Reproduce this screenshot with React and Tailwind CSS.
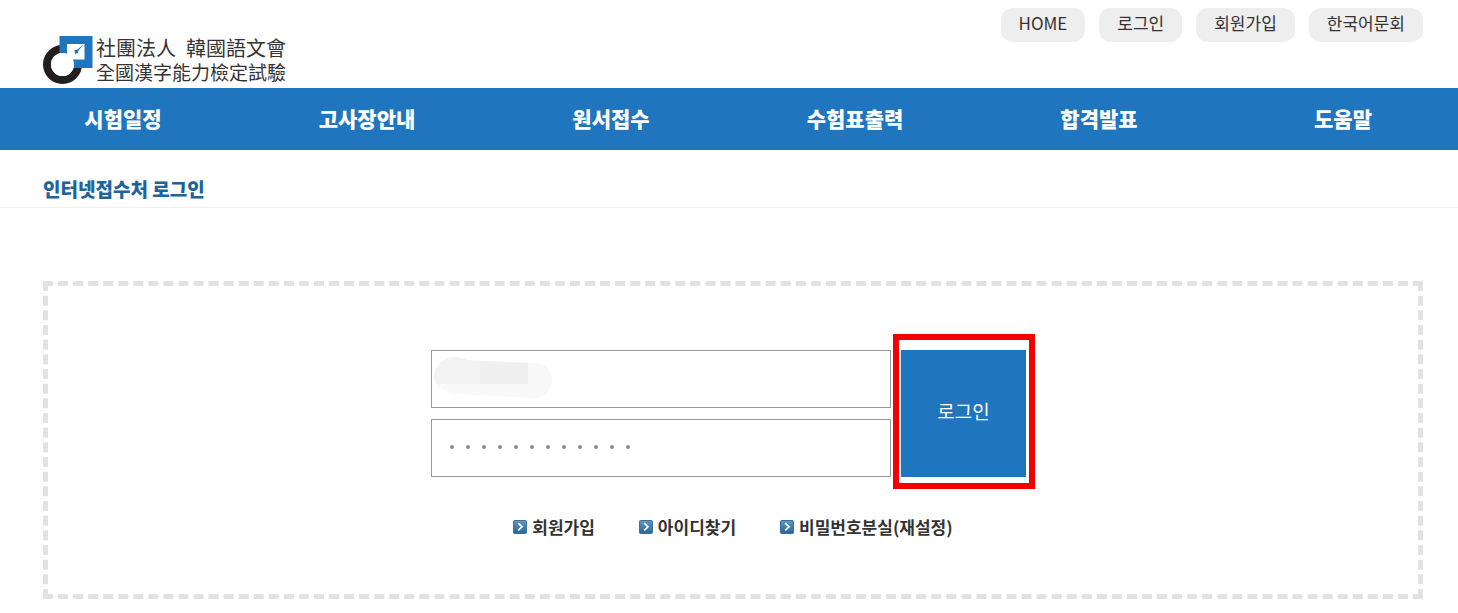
import { useState } from "react";

const topLinks = ["HOME", "로그인", "회원가입", "한국어문회"];
const menu = ["시험일정", "고사장안내", "원서접수", "수험표출력", "합격발표", "도움말"];
const helpLinks = ["회원가입", "아이디찾기", "비밀번호분실(재설정)"];

function LogoMark() {
  return (
    <svg viewBox="0 0 50 48" className="h-12 w-[50px]" aria-hidden="true">
      <circle cx="19.5" cy="28.5" r="15.5" fill="none" stroke="#231f20" strokeWidth="8" />
      <path d="M16.5 0H49.5V32H30.5A12 12 0 0 0 16.5 17Z" fill="#1f75be" />
      <circle cx="19.5" cy="28.5" r="11.5" fill="#fff" />
      <path d="M24 8H41.5V23.5H29L24 19Z" fill="#fff" />
      <path d="M40.5 8.5L35.4 14.6L35 17.2L32 17.8L31.4 14.2L34.4 13.4Z" fill="#1f75be" />
    </svg>
  );
}

function ArrowIcon() {
  return (
    <svg viewBox="0 0 14 14" className="size-3.5" aria-hidden="true">
      <defs>
        <linearGradient id="arrowFill" x1="0" y1="0" x2="0" y2="1">
          <stop offset="0" stopColor="#5f97bf" />
          <stop offset="1" stopColor="#2a649b" />
        </linearGradient>
      </defs>
      <rect x="0.5" y="0.5" width="13" height="13" rx="1" fill="url(#arrowFill)" stroke="#3a719d" />
      <path d="M5.2 3.2L9 6.8L5.2 10.4" fill="none" stroke="#fff" strokeWidth="1.7" />
    </svg>
  );
}

function PasswordField() {
  const [value, setValue] = useState("abcdefghijkl");
  return (
    <div className="relative">
      <input
        type="password"
        aria-label="비밀번호"
        value={value}
        onChange={(e) => setValue(e.target.value)}
        className="block h-[58px] w-full border border-[#999] px-4 text-[16px] text-transparent outline-none"
      />
      <div className="pointer-events-none absolute inset-x-[19px] top-[26px] flex gap-3 overflow-hidden" aria-hidden="true">
        {Array.from(value, (_, i) => (
          <span key={i} className="size-1 shrink-0 rounded-full bg-[#8c8c8c]" />
        ))}
      </div>
    </div>
  );
}

export default function App() {
  return (
    <div className="bg-white font-['Noto_Sans_CJK_KR',sans-serif] text-[#333]">
      <header>
        <div className="flex h-22 items-start justify-between pr-[35px] pl-[43px]">
          <a href="#" className="flex gap-[3px] pt-9 text-[#333]">
            <LogoMark />
            <span className="flex flex-col font-['Noto_Sans_CJK_TC',sans-serif]">
              <span className="flex gap-[10px] text-[20px] leading-6">
                <span>社團法人</span>
                <span>韓國語文會</span>
              </span>
              <span className="text-[19px] leading-6">全國漢字能力檢定試驗</span>
            </span>
          </a>
          <nav className="flex gap-[14px] pt-2">
            {topLinks.map((label) => (
              <a key={label} href="#" className="h-[34px] rounded-xl bg-[#eee] px-[18px] text-[17px] leading-[30px]">
                {label}
              </a>
            ))}
          </nav>
        </div>
        <nav className="grid h-[62px] grid-cols-6 items-center gap-[84px] bg-[#1f75be] pr-[35px] pl-[43px] text-center text-[21px] font-black text-white">
          {menu.map((label) => (
            <a key={label} href="#" className="whitespace-nowrap">
              {label}
            </a>
          ))}
        </nav>
      </header>

      <main>
        <h1 className="border-b border-[#eee] pt-6 pb-[3px] pl-[43px] text-[19px] leading-[30px] font-black text-[#20639b]">
          인터넷접수처 로그인
        </h1>

        <section className="mt-[73px] mr-[35px] mb-[14px] ml-[43px] border-5 border-dashed border-[#e2e2e2] pt-16 pb-[55px]">
          <form className="flex justify-center gap-[10px] pr-[9px]" onSubmit={(e) => e.preventDefault()}>
            <div className="flex w-[460px] flex-col gap-[11px]">
              <div className="relative">
                <input type="text" aria-label="아이디" className="block h-[58px] w-full border border-[#999] px-4 text-[16px] outline-none" />
                <svg viewBox="0 0 118 42" className="pointer-events-none absolute top-[7px] left-[3px] h-[42px] w-[118px]" aria-hidden="true">
                  <path d="M19 0Q27 0 33 3L103 6Q118 9 118 24Q116 40 101 41L20 37Q3 34 0 19Q2 3 19 0Z" fill="#f9f9f9" />
                  <path d="M19 0Q27 0 33 3L46 4V27H2Q0 22 0 19Q2 3 19 0Z" fill="#f3f3f3" />
                  <path d="M46 4L94 6V27H46Z" fill="#efefef" />
                </svg>
              </div>
              <PasswordField />
            </div>
            <div className="relative flex">
              <button type="submit" className="w-[125px] bg-[#1f75be] pb-1 text-[19px] text-white">
                로그인
              </button>
              <span className="pointer-events-none absolute -top-4 -right-[9px] -bottom-3 -left-2 border-6 border-[#f40000]" />
            </div>
          </form>
          <div className="mt-[38px] flex justify-center gap-11 text-[17px] leading-6 font-bold">
            {helpLinks.map((label) => (
              <a key={label} href="#" className="flex items-center gap-[5px]">
                <ArrowIcon />
                {label}
              </a>
            ))}
          </div>
        </section>
      </main>
    </div>
  );
}
